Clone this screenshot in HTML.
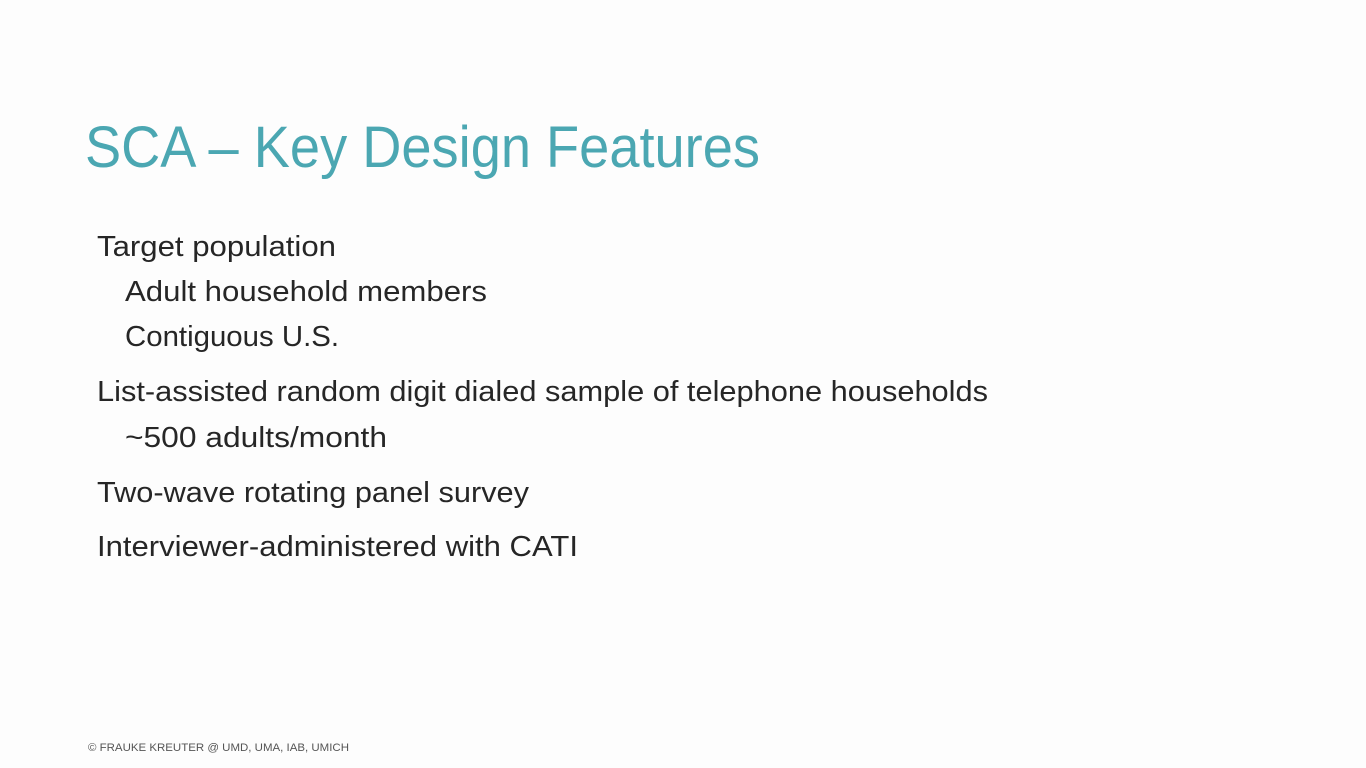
<!DOCTYPE html>
<html><head><meta charset="utf-8"><style>
html,body{margin:0;padding:0;background:#fdfdfd;width:1366px;height:768px;overflow:hidden}
svg{display:block}
text{font-family:"Liberation Sans",sans-serif}
</style></head><body>
<svg width="1366" height="768" viewBox="0 0 1366 768" xmlns="http://www.w3.org/2000/svg">
<rect width="1366" height="768" fill="#fdfdfd"/>
<text x="85" y="167" font-size="58" fill="#4ba7b2" textLength="675" lengthAdjust="spacingAndGlyphs">SCA – Key Design Features</text>
<g font-size="29" fill="#262626">
<text x="97" y="256" textLength="239" lengthAdjust="spacingAndGlyphs">Target population</text>
<text x="125" y="301" textLength="362" lengthAdjust="spacingAndGlyphs">Adult household members</text>
<text x="125" y="346" textLength="214" lengthAdjust="spacingAndGlyphs">Contiguous U.S.</text>
<text x="97" y="401" textLength="891" lengthAdjust="spacingAndGlyphs">List-assisted random digit dialed sample of telephone households</text>
<text x="125" y="447" textLength="262" lengthAdjust="spacingAndGlyphs">~500 adults/month</text>
<text x="97" y="502" textLength="432" lengthAdjust="spacingAndGlyphs">Two-wave rotating panel survey</text>
<text x="97" y="556" textLength="481" lengthAdjust="spacingAndGlyphs">Interviewer-administered with CATI</text>
</g>
<text x="88" y="751" font-size="11" fill="#555" textLength="261" lengthAdjust="spacingAndGlyphs">© FRAUKE KREUTER @ UMD, UMA, IAB,  UMICH</text>
</svg>
</body></html>
